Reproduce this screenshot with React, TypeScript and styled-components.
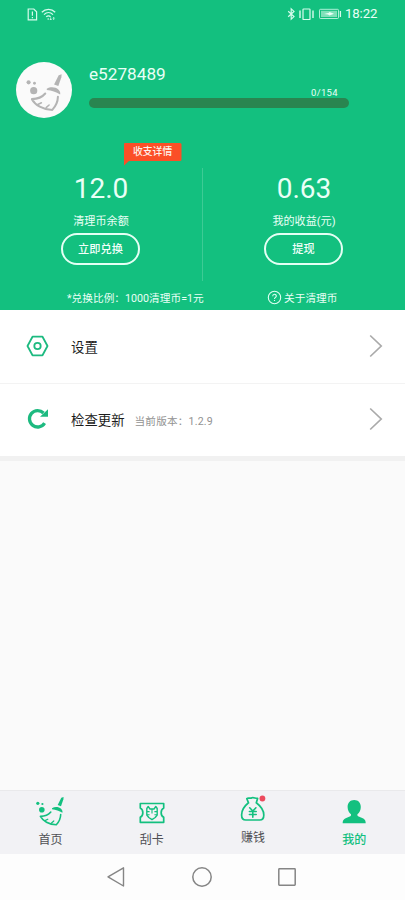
import React from 'react';
import styled, { createGlobalStyle } from 'styled-components';

const GREEN = '#13c07f';

const GlobalStyle = createGlobalStyle`
  * { box-sizing: border-box; }
  body { margin: 0; font-family: Roboto, "Noto Sans CJK SC", sans-serif; background: #fafafa; }
  svg { display: block; flex: none; }
  button { font-family: inherit; background: none; padding: 0; margin: 0; }
`;

const Screen = styled.div`
  width: 405px;
  height: 900px;
  display: flex;
  flex-direction: column;
  overflow: hidden;
  background: #fafafa;
`;

const Header = styled.header`
  height: 310.4px;
  flex: none;
  background: ${GREEN};
  color: #e9fff6;
`;

const StatusBar = styled.div`
  height: 28px;
  padding: 0 27px 0 27px;
  display: flex;
  justify-content: space-between;
  align-items: center;
`;

const StatusGroup = styled.div<{ $gap: number }>`
  display: flex;
  align-items: center;
  gap: ${(p) => p.$gap}px;
`;

const Clock = styled.span`
  font-size: 13.2px;
  line-height: 16px;
  width: 33px;
  white-space: nowrap;
  letter-spacing: -0.1px;
`;

const Profile = styled.div`
  display: flex;
  height: 90px;
  padding: 34px 0 0 16px;
  gap: 17px;
`;

const Avatar = styled.div`
  width: 56px;
  height: 56px;
  border-radius: 50%;
  background: #fafafa;
  padding: 11px 0 0 8.5px;
  flex: none;
`;

const ProfileInfo = styled.div`
  width: 260px;
`;

const UserName = styled.div`
  font-size: 17.2px;
  line-height: 20px;
  padding-top: 2px;
`;

const Progress = styled.div`
  font-size: 9.5px;
  line-height: 10px;
  letter-spacing: 0.35px;
  text-align: right;
  padding-right: 11px;
  margin-top: 4px;
`;

const Track = styled.div`
  height: 10px;
  margin-top: 0.4px;
  border-radius: 5px;
  background: #298550;
`;

const Stats = styled.div`
  display: flex;
  height: 163px;
  padding-top: 50px;
`;

const Stat = styled.div`
  position: relative;
  width: 202px;
  display: flex;
  flex-direction: column;
  align-items: center;
`;

const Divider = styled.div`
  width: 1px;
  height: 113px;
  background: #3dcb95;
`;

const Amount = styled.div`
  font-size: 28px;
  line-height: 32px;
  margin-top: 4.5px;
`;

const StatLabel = styled.div`
  font-size: 11.1px;
  line-height: 16px;
  margin-top: 9px;
`;

const PillButton = styled.button`
  width: 79px;
  height: 32px;
  margin: 3px 1px 0 0;
  border: 2px solid #e4fff4;
  border-radius: 16px;
  color: #f2fffa;
  font-size: 11.2px;
  font-weight: 500;
  line-height: 16px;
  padding-top: 3px;
`;

const DetailTag = styled.div`
  position: absolute;
  left: 124px;
  top: -25px;
  width: 58px;
  height: 23px;
`;

const TagText = styled.span`
  position: absolute;
  left: 9px;
  top: 2px;
  font-size: 9.8px;
  line-height: 14px;
  font-weight: 500;
  color: #fff3ec;
  white-space: nowrap;
`;

const Notes = styled.div`
  display: flex;
  height: 29px;
  padding-top: 9px;
  font-size: 10.7px;
  line-height: 18px;
`;

const RatioNote = styled.div`
  width: 267px;
  padding-left: 67px;
  white-space: nowrap;
`;

const AboutNote = styled.div`
  display: flex;
  gap: 2px;
  white-space: nowrap;
`;

const Menu = styled.main`
  border-bottom: 5px solid #f1f1f1;
`;

const MenuRow = styled.div<{ $divided?: boolean }>`
  height: ${(p) => (p.$divided ? 73.6 : 72)}px;
  background: #fff;
  border-bottom: ${(p) => (p.$divided ? '1.5px solid #f3f3f3' : 'none')};
  display: flex;
  align-items: center;
  padding: 0 22px 1px 26px;
`;

const RowTitle = styled.span`
  margin-left: 22px;
  font-size: 13.4px;
  line-height: 20px;
  color: #1c1c1c;
  padding-top: 3px;
`;

const RowHint = styled.span`
  margin-left: 10px;
  font-size: 10.6px;
  line-height: 16px;
  color: #929292;
  padding-top: 5px;
  letter-spacing: 0.2px;
`;

const Spacer = styled.div`
  flex: 1;
`;

const TabBar = styled.nav`
  height: 64px;
  flex: none;
  display: grid;
  grid-template-columns: repeat(4, 1fr);
  background: #f2f2f5;
  border-top: 1.5px solid #e9e9eb;
`;

const Tab = styled.div<{ $active?: boolean; $raised?: boolean }>`
  display: flex;
  flex-direction: column;
  align-items: center;
  padding-top: ${(p) => (p.$raised ? 3 : 5)}px;
  color: ${(p) => (p.$active ? GREEN : '#505054')};
  font-size: 12px;
  line-height: 18px;
  font-weight: ${(p) => (p.$active ? 500 : 400)};
`;

const TabIcon = styled.div`
  height: 34px;
`;

const SystemNav = styled.div`
  height: 46px;
  flex: none;
  display: flex;
  justify-content: center;
  align-items: center;
  gap: 64.5px;
  padding-right: 2px;
  background: #fdfdfd;
`;

const Broom = ({ size, color }: { size: number; color: string }) => (
  <svg width={size} height={size} viewBox="0 0 32 32" fill="none" stroke={color} strokeLinecap="round" strokeLinejoin="round">
    <g fill={color} stroke="none">
      <circle cx="2.8" cy="7.3" r="1.6" />
      <circle cx="7.4" cy="8" r="1.1" />
      <circle cx="6.8" cy="13.8" r="2.8" />
      <path d="M26.3 1.8 L28.6 1 L28.4 3.3 L26 10.2 L22.7 9 Z" />
      <path d="M17 12.2 C20 10.3 24 10.9 26 12.8 C27.3 14 27.8 15.5 27.4 16.8 C24.3 14.8 20.8 13.5 17 13.2 Z" />
    </g>
    <path d="M15.8 16 C13.8 18.4 9.8 20.3 5.4 20.4 C7.8 24.8 14 28.6 21.3 28.8 C23.8 26.2 25.6 22.5 25.7 18.6" strokeWidth="1.6" />
    <path d="M10 24.6 L12.8 23.2 M16.5 27 L18.8 25" strokeWidth="1.2" />
  </svg>
);

const SimAlert = () => (
  <svg width="11" height="13" viewBox="0 0 11 13" fill="none" stroke="#d7fbed" strokeWidth="1.2">
    <path d="M1.2 1 H6.8 L9.6 3.8 V11.8 H1.2 Z M5.4 3.5 V7.8 M5.4 9 V10.3" />
  </svg>
);

const Wifi = () => (
  <svg width="15" height="13" viewBox="0 0 15 13" fill="none" stroke="#d7fbed" strokeWidth="1.3">
    <path d="M.8 4.3 C4.6 .5 10.4 .5 14.2 4.3 M3 6.6 C5.7 4 9.3 4 12 6.6 M5.2 8.8 C6.8 7.5 8.2 7.5 9.6 8.8" />
    <circle cx="7.2" cy="11" r=".8" fill="#d7fbed" stroke="none" />
    <path d="M9.7 9.5 V12 M8.9 11 L9.7 12 L10.5 11 M12.7 12 V9.5 M11.9 10.4 L12.7 9.5 L13.5 10.4" strokeWidth=".8" />
  </svg>
);

const StatusIcons = () => (
  <svg width="56" height="14" viewBox="286 7 56 14" fill="none" stroke="#d7fbed" strokeWidth="1.2">
    <path d="M288.2 11.2 L294 16.6 L291.2 19.2 V8.8 L294 11.4 L288.2 16.8" />
    <rect x="303" y="9" width="7" height="10.5" rx=".6" />
    <path d="M300 10.5 V18 M313 10.5 V18" strokeWidth="1.4" />
    <rect x="319.5" y="9.3" width="19" height="9.2" rx="1" strokeWidth=".8" />
    <rect x="321" y="10.8" width="16" height="6.2" fill="#7fe0b9" stroke="none" />
    <path d="M324 13.9 L329 12.7 L329.5 12 L334 13.8 L329.5 15.6 L328 14.6 Z" fill="#e9fff6" stroke="none" />
    <path d="M340.4 11 V17" strokeWidth="1.3" />
  </svg>
);

const Help = () => (
  <svg width="15" height="15" viewBox="0 0 15 15" fill="none" stroke="#e0fff2" strokeWidth="1.1">
    <circle cx="7.5" cy="7.5" r="6.2" />
    <path d="M5.7 6.2 C5.7 3.7 9.3 3.7 9.3 6 C9.3 7.4 7.5 7.3 7.5 9 M7.5 9.9 V11.1" />
  </svg>
);

const Hexagon = () => (
  <svg width="23" height="22" viewBox="0 0 23 22" fill="none" stroke="#1dba80" strokeWidth="1.8" strokeLinejoin="round">
    <path d="M6.5 1.7 H16.5 L21.5 11 L16.5 20.3 H6.5 L1.5 11 Z" />
    <circle cx="11.5" cy="11" r="3.2" />
  </svg>
);

const Refresh = () => (
  <svg width="23" height="22" viewBox="0 0 23 22">
    <path d="M18.6 15.2 A8.2 8.2 0 1 1 17.5 5" fill="none" stroke="#1dba80" strokeWidth="3.3" />
    <path d="M22 1.2 V8.8 H14 Z" fill="#1dba80" />
  </svg>
);

const Chevron = () => (
  <svg width="14" height="24" viewBox="0 0 14 24" fill="none" stroke="#aaa" strokeWidth="1.7">
    <path d="M1.2 1.5 L12.2 12 L1.2 22.5" />
  </svg>
);

const Ticket = () => (
  <svg width="28" height="32" viewBox="0 0 28 32" fill="none" stroke={GREEN} strokeWidth="1.7" strokeLinejoin="round">
    <path d="M2.3 7.5 H25.7 V12 C22.3 14 22.3 19.3 25.7 21.3 V26.3 H2.3 V21.3 C5.7 19.3 5.7 14 2.3 12 Z" />
    <path d="M10.2 10.5 L12 13 H16 L17.8 10.5 L19.2 12.5 V19 L17.2 21.5 L14 23.6 L10.8 21.5 L8.8 19 V12.5 Z" strokeWidth="1.4" />
    <path d="M9 15.6 H11.6 M16.4 15.6 H19 M9 18.7 H11.6 M16.4 18.7 H19 M14 13 V17.5" strokeWidth="1.1" />
  </svg>
);

const MoneyBag = () => (
  <svg width="28" height="32" viewBox="0 0 28 32" fill="none" stroke={GREEN} strokeWidth="1.7" strokeLinejoin="round" strokeLinecap="round">
    <path d="M9.5 8.8 L7.8 4.6 C9.5 3.2 11 5 13 3.8 C15 3.2 16.5 4.8 18.6 4.4 L17.3 8.8 M9.2 9 C5.5 12 2.6 16.2 2.6 21 C2.6 24.5 4 26 6.8 26 H20.8 C23.3 26 24.8 24.7 24.8 21 C24.8 16.2 21.5 12 17.6 9" />
    <path d="M10.7 13.8 L13.8 17 L16.9 13.8 M10.4 17.5 H17.2 M10.4 20.5 H17.2 M13.8 17 V23.3" strokeWidth="1.6" />
    <circle cx="23.4" cy="4.5" r="2.9" fill="#ec4a5d" stroke="none" />
  </svg>
);

const Person = () => (
  <svg width="28" height="32" viewBox="0 0 28 32" fill={GREEN}>
    <path d="M14.2 4 C18.3 4 20.8 6.8 20.8 11 C20.8 14 19.4 16.8 17.4 18.2 C17 20.3 18.4 20.4 21 21.5 C24.5 22.8 25.7 24 25.7 27.2 H2.7 C2.7 24 4 22.8 7.4 21.5 C10 20.4 11.4 20.3 11 18.2 C9 16.8 7.6 14 7.6 11 C7.6 6.8 10.1 4 14.2 4 Z" />
  </svg>
);

const TabLabel = styled.span`
  padding-top: 1px;
`;

export default function App() {
  return (
    <>
      <GlobalStyle />
      <Screen>
        <Header>
          <StatusBar>
            <StatusGroup $gap={3}>
              <SimAlert />
              <Wifi />
            </StatusGroup>
            <StatusGroup $gap={3}>
              <StatusIcons />
              <Clock>18:22</Clock>
            </StatusGroup>
          </StatusBar>
          <Profile>
            <Avatar>
              <Broom size={41} color="#b4b4b4" />
            </Avatar>
            <ProfileInfo>
              <UserName>e5278489</UserName>
              <Progress>0/154</Progress>
              <Track />
            </ProfileInfo>
          </Profile>
          <Stats>
            <Stat>
              <DetailTag>
                <svg width="58" height="23" viewBox="0 0 58 23">
                  <path d="M0 1 Q0 0 1 0 H56 Q57.5 0 57.5 1.5 V16.5 Q57.5 18 56 18 H5 L0 22.5 Z" fill="#fb4f27" />
                </svg>
                <TagText>收支详情</TagText>
              </DetailTag>
              <Amount>12.0</Amount>
              <StatLabel>清理币余额</StatLabel>
              <PillButton>立即兑换</PillButton>
            </Stat>
            <Divider />
            <Stat>
              <Amount>0.63</Amount>
              <StatLabel>我的收益(元)</StatLabel>
              <PillButton>提现</PillButton>
            </Stat>
          </Stats>
          <Notes>
            <RatioNote>*兑换比例：1000清理币=1元</RatioNote>
            <AboutNote>
              <Help />
              关于清理币
            </AboutNote>
          </Notes>
        </Header>
        <Menu>
          <MenuRow $divided>
            <Hexagon />
            <RowTitle>设置</RowTitle>
            <Spacer />
            <Chevron />
          </MenuRow>
          <MenuRow>
            <Refresh />
            <RowTitle>检查更新</RowTitle>
            <RowHint>当前版本：1.2.9</RowHint>
            <Spacer />
            <Chevron />
          </MenuRow>
        </Menu>
        <Spacer />
        <TabBar>
          <Tab>
            <TabIcon><Broom size={32} color={GREEN} /></TabIcon>
            <TabLabel>首页</TabLabel>
          </Tab>
          <Tab>
            <TabIcon><Ticket /></TabIcon>
            <TabLabel>刮卡</TabLabel>
          </Tab>
          <Tab $raised>
            <TabIcon><MoneyBag /></TabIcon>
            <TabLabel>赚钱</TabLabel>
          </Tab>
          <Tab $active>
            <TabIcon><Person /></TabIcon>
            <TabLabel>我的</TabLabel>
          </Tab>
        </TabBar>
        <SystemNav>
          <svg width="20" height="22" viewBox="0 0 20 22" fill="none" stroke="#858585" strokeWidth="1.4" strokeLinejoin="round">
            <path d="M17.5 1.8 V20 L2 10.9 Z" />
          </svg>
          <svg width="22" height="22" viewBox="0 0 22 22" fill="none" stroke="#858585" strokeWidth="1.5">
            <circle cx="11" cy="11" r="9.2" />
          </svg>
          <svg width="20" height="20" viewBox="0 0 20 20" fill="none" stroke="#858585" strokeWidth="1.5">
            <rect x="1.8" y="1.8" width="16.4" height="16.4" rx=".6" />
          </svg>
        </SystemNav>
      </Screen>
    </>
  );
}
